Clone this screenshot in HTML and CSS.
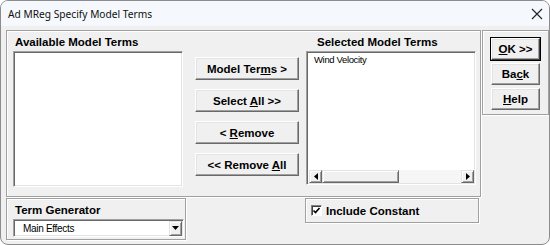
FILE: index.html
```html
<!DOCTYPE html>
<html>
<head>
<meta charset="utf-8">
<link rel="stylesheet" href="styles.css">
</head>
<body>
<div class="window">
  <div class="titlebar">
    <span class="title">Ad MReg Specify Model Terms</span>
    <svg class="close" width="12" height="12" viewBox="0 0 12 12"><path d="M1 1L11 11M11 1L1 11" stroke="#222" stroke-width="1.1" fill="none"/></svg>
  </div>
  <div class="client">
    <div class="toprow">
      <div class="frame mainframe">
        <div class="col">
          <div class="label">Available Model Terms</div>
          <div class="listbox avail"></div>
        </div>
        <div class="btncol">
          <div class="btn wide"><span>Model Ter<u>m</u>s &gt;</span></div>
          <div class="btn wide"><span>Select <u>A</u>ll &gt;&gt;</span></div>
          <div class="btn wide"><span>&lt; <u>R</u>emove</span></div>
          <div class="btn wide"><span>&lt;&lt; Remove <u>A</u>ll</span></div>
        </div>
        <div class="col">
          <div class="label sel-label">Selected Model Terms</div>
          <div class="listbox sel">
            <div class="items"><div class="item">Wind Velocity</div></div>
            <div class="hscroll">
              <div class="sbtn"><svg width="4" height="7" viewBox="0 0 4 7"><path d="M4 0V7L0 3.5Z" fill="#000"/></svg></div>
              <div class="thumb"></div>
              <div class="track"></div>
              <div class="sbtn"><svg width="4" height="7" viewBox="0 0 4 7"><path d="M0 0V7L4 3.5Z" fill="#000"/></svg></div>
            </div>
          </div>
        </div>
      </div>
      <div class="frame sideframe">
        <div class="btn small default"><span><u>O</u>K &gt;&gt;</span></div>
        <div class="btn small"><span>Ba<u>c</u>k</span></div>
        <div class="btn small"><span><u>H</u>elp</span></div>
      </div>
    </div>
    <div class="bottomrow">
      <div class="frame genframe">
        <div class="label gen">Term Generator</div>
        <div class="combo">
          <span class="combotext">Main Effects</span>
          <div class="dropbtn"><svg width="7" height="4" viewBox="0 0 7 4"><path d="M0 0H7L3.5 4Z" fill="#000"/></svg></div>
        </div>
      </div>
      <div class="frame constframe">
        <div class="check"><svg width="9" height="9" viewBox="0 0 9 9"><path d="M1.5 4.5L3.5 6.5L7.5 2" stroke="#000" stroke-width="1.6" fill="none"/></svg></div>
        <span class="label chk">Include Constant</span>
      </div>
    </div>
  </div>
</div>
</body>
</html>
```
FILE: styles.css
```css
* { box-sizing: border-box; }
html, body { margin: 0; padding: 0; background: #ffffff; }
body { width: 550px; height: 245px; overflow: hidden; }

.window {
  width: 550px;
  height: 245px;
  border: 1px solid #8c8c8c;
  border-radius: 8px;
  background: #f0f0f0;
  overflow: hidden;
  font-family: "Liberation Sans", Arial, sans-serif;
}

.titlebar {
  height: 25px;
  background: #f5f8fc;
  display: flex;
  align-items: center;
  justify-content: space-between;
  padding: 0 6px 0 7px;
}
.title {
  font-family: "Noto Sans", "Open Sans", sans-serif;
  font-size: 10.2px;
  color: #111;
}
.close { margin-top: 1px; }

.client { padding: 4px 0 0 5px; }

.toprow { display: flex; align-items: flex-start; }

.frame {
  border: 1px solid #a0a0a0;
  box-shadow: inset 1px 1px 0 #ffffff, 1px 1px 0 #ffffff;
}

.mainframe {
  width: 475px;
  height: 167px;
  display: flex;
  padding: 0 0 0 6px;
}

.col { width: 170px; display: flex; flex-direction: column; }

.label {
  font-weight: bold;
  font-size: 11.5px;
  color: #000;
  height: 20px;
  padding: 5px 0 0 2px;
  line-height: 12px;
  white-space: nowrap;
}
.label.sel-label { padding-left: 11px; }

.listbox {
  background: #ffffff;
  border: 1px solid;
  border-color: #a0a0a0 #ffffff #ffffff #a0a0a0;
  box-shadow: inset 1px 1px 0 #696969, inset -1px -1px 0 #e3e3e3;
}
.avail { height: 136px; }
.sel { height: 134px; display: flex; flex-direction: column; padding: 2px 1px 1px 2px; }
.items { flex: 1; }
.item {
  font-size: 9.5px;
  letter-spacing: -0.35px;
  line-height: 11px;
  padding: 0 0 0 5px;
  color: #000;
}

.hscroll { height: 13px; display: flex; }
.sbtn {
  width: 13px;
  height: 13px;
  background: #f0f0f0;
  border: 1px solid;
  border-color: #e3e3e3 #696969 #696969 #e3e3e3;
  box-shadow: inset 1px 1px 0 #fff, inset -1px -1px 0 #a0a0a0;
  display: flex;
  align-items: center;
  justify-content: center;
}
.thumb {
  width: 77px;
  height: 13px;
  background: #f0f0f0;
  border: 1px solid;
  border-color: #e3e3e3 #696969 #696969 #e3e3e3;
  box-shadow: inset 1px 1px 0 #fff, inset -1px -1px 0 #a0a0a0;
}
.track { flex: 1; background: #f6f6f6; }

.btncol {
  margin-left: 12px;
  margin-right: 7px;
  padding-top: 26px;
  display: flex;
  flex-direction: column;
  gap: 9px;
}

.btn {
  background: #f0f0f0;
  border: 1px solid;
  border-color: #ffffff #696969 #696969 #ffffff;
  box-shadow: inset -1px -1px 0 #a0a0a0, inset 1px 1px 0 #e3e3e3;
  font-weight: bold;
  font-size: 11.5px;
  color: #000;
  display: flex;
  align-items: center;
  justify-content: center;
  white-space: nowrap;
}
.btn u { text-underline-offset: 1px; }
.wide { width: 104px; height: 23px; }

.sideframe {
  width: 67px;
  height: 85px;
  margin-left: 1px;
  display: flex;
  flex-direction: column;
  align-items: center;
  padding-top: 7px;
  gap: 3px;
}
.small { width: 49px; height: 22px; }
.default {
  outline: 1px solid #000;
  outline-offset: 0;
  border-color: #ffffff #404040 #404040 #ffffff;
}

.bottomrow { display: flex; margin-top: 1px; align-items: flex-start; }

.genframe {
  width: 180px;
  height: 42px;
  padding-left: 6px;
}
.label.gen { height: 20px; padding-top: 5px; }
.combo {
  width: 171px;
  height: 18px;
  background: #fff;
  border: 1px solid;
  border-color: #a0a0a0 #ffffff #ffffff #a0a0a0;
  box-shadow: inset 1px 1px 0 #696969, inset -1px -1px 0 #e3e3e3;
  display: flex;
  align-items: center;
  justify-content: space-between;
  padding: 1px 1px 1px 2px;
}
.combotext {
  font-size: 10px;
  letter-spacing: -0.3px;
  padding-left: 7px;
  color: #000;
}
.dropbtn {
  width: 13px;
  height: 15px;
  background: #f0f0f0;
  border: 1px solid;
  border-color: #e3e3e3 #696969 #696969 #e3e3e3;
  box-shadow: inset 1px 1px 0 #fff, inset -1px -1px 0 #a0a0a0;
  display: flex;
  align-items: center;
  justify-content: center;
}

.constframe {
  width: 174px;
  height: 25px;
  margin-left: 119px;
  display: flex;
  align-items: center;
  padding-left: 5px;
}
.check {
  width: 11px;
  height: 11px;
  background: #fff;
  border: 1px solid;
  border-color: #808080 #ffffff #ffffff #808080;
  box-shadow: inset 1px 1px 0 #404040;
  display: flex;
  align-items: center;
  justify-content: center;
}
.label.chk { height: auto; padding: 0 0 0 4px; }
```
